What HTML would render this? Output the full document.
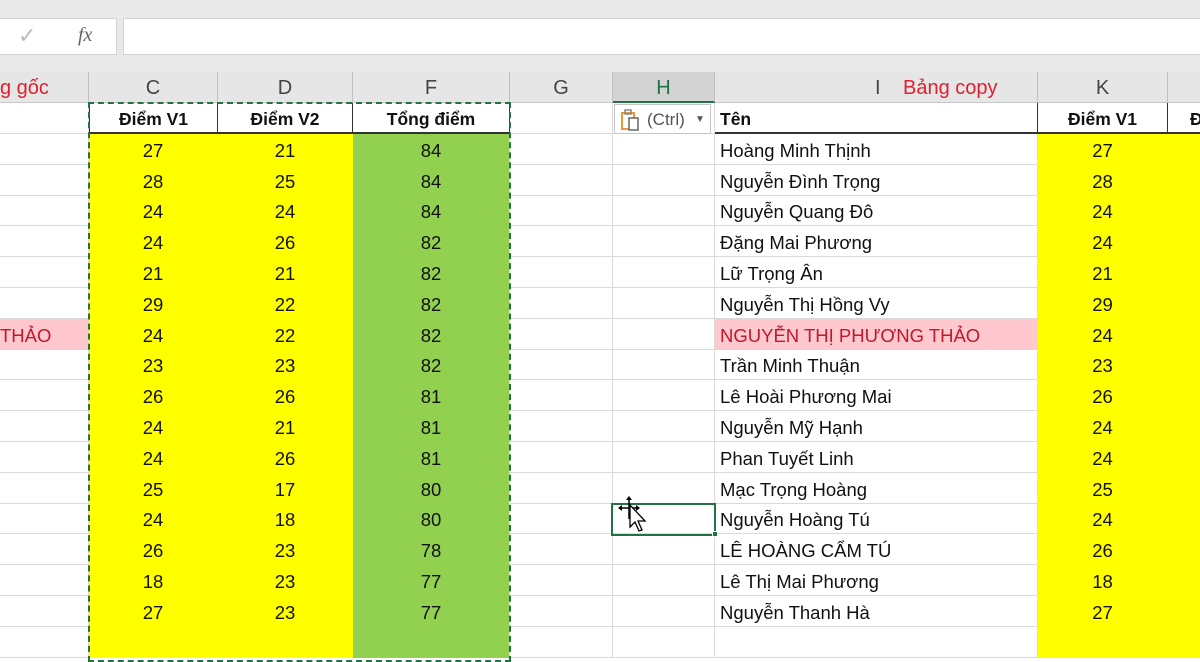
<!DOCTYPE html>
<html><head><meta charset="utf-8"><style>
*{margin:0;padding:0;box-sizing:border-box}
body{width:1200px;height:630px;overflow:hidden;background:#fff;font-family:"Liberation Sans",sans-serif;position:relative}
.top{position:absolute;left:0;top:0;width:1200px;height:72px;background:#e9e9e9}
.fxbox{position:absolute;left:0;top:18px;width:117px;height:37px;background:#fff;border:1px solid #d4d4d4;border-left:none}
.inp{position:absolute;left:123px;top:18px;width:1077px;height:37px;background:#fff;border:1px solid #d4d4d4;border-right:none}
.hdr{position:absolute;left:0;top:72px;height:31px;width:1200px;background:#e6e6e6;border-bottom:1px solid #c8c8c8}
.hc{position:absolute;top:0;height:31px;line-height:33px;text-align:center;color:#444;font-size:20px;border-right:1px solid #c0c0c0}
.row{position:absolute;left:0;width:1200px;height:31px}
.c{position:absolute;top:0;height:31px;line-height:34px;font-size:18.5px;color:#111;border-right:1px solid #dadada;border-bottom:1px solid #dadada;text-align:center;white-space:nowrap;overflow:hidden}
.y{background:#ffff00}.g{background:#92d050}.p{background:#ffc7ce}
.n{text-align:left;padding-left:5px}
.b{font-weight:bold;font-size:17.5px;line-height:32px;border-bottom:2px solid #333;border-right:1px solid #333}
.red{color:#c0192b}
</style></head><body>
<div class="top"></div>
<div class="fxbox"><span style="position:absolute;left:18px;top:4px;font-size:22px;color:#bbb">✓</span><span style="position:absolute;left:78px;top:5px;font-family:'Liberation Serif',serif;font-style:italic;font-size:20px;color:#666">fx</span></div>
<div class="inp"></div>
<div class="hdr">
<div class="hc red" style="left:0;width:89px;text-align:left;color:#e02030">g gốc</div>
<div class="hc" style="left:89px;width:129px">C</div>
<div class="hc" style="left:218px;width:135px">D</div>
<div class="hc" style="left:353px;width:157px">F</div>
<div class="hc" style="left:510px;width:103px">G</div>
<div class="hc" style="left:613px;width:102px;background:#d3d3d3;color:#217346;border-bottom:2px solid #217346">H</div>
<div class="hc" style="left:715px;width:323px"><span style="position:absolute;left:160px">I</span><span style="position:absolute;left:188px;color:#e02030">Bảng copy</span></div>
<div class="hc" style="left:1038px;width:130px">K</div>
<div class="hc" style="left:1168px;width:40px"></div>
</div>
<div id="rows"></div>
<script>
var d=[["","","","","Tên",""],
[27,21,84,"Hoàng Minh Thịnh"],[28,25,84,"Nguyễn Đình Trọng"],[24,24,84,"Nguyễn Quang Đô"],[24,26,82,"Đặng Mai Phương"],[21,21,82,"Lữ Trọng Ân"],[29,22,82,"Nguyễn Thị Hồng Vy"],[24,22,82,"NGUYỄN THỊ PHƯƠNG THẢO"],[23,23,82,"Trần Minh Thuận"],[26,26,81,"Lê Hoài Phương Mai"],[24,21,81,"Nguyễn Mỹ Hạnh"],[24,26,81,"Phan Tuyết Linh"],[25,17,80,"Mạc Trọng Hoàng"],[24,18,80,"Nguyễn Hoàng Tú"],[26,23,78,"LÊ HOÀNG CẨM TÚ"],[18,23,77,"Lê Thị Mai Phương"],[27,23,77,"Nguyễn Thanh Hà"],["","","",""]];
var h="";
for(var i=0;i<d.length;i++){var r=d[i],t=103+i*30.8,hd=i==0,pk=i==7;
h+='<div class="row" style="top:'+t+'px">';
h+='<div class="c '+(pk?'p red':'')+'" style="left:0;width:89px;text-align:right;padding-right:44px">'+(pk?'THẢO':'')+'</div>';
if(hd){h+='<div class="c b" style="left:89px;width:129px;border-left:1px solid #333">Điểm V1</div><div class="c b" style="left:218px;width:135px">Điểm V2</div><div class="c b" style="left:353px;width:157px">Tổng điểm</div>';}
else{h+='<div class="c y" style="left:89px;width:129px;border-right-color:#ffff00;border-bottom-color:#ffff00">'+r[0]+'</div><div class="c y" style="left:218px;width:135px;border-right-color:#ffff00;border-bottom-color:#ffff00">'+r[1]+'</div><div class="c g" style="left:353px;width:157px;border-bottom-color:#92d050">'+r[2]+'</div>';}
h+='<div class="c" style="left:510px;width:103px"></div><div class="c" style="left:613px;width:102px"></div>';
if(hd){h+='<div class="c b n" style="left:715px;width:323px">Tên</div><div class="c b" style="left:1038px;width:130px">Điểm V1</div><div class="c b" style="left:1168px;width:40px;text-align:left;padding-left:22px">Đ</div>';}
else{h+='<div class="c n '+(pk?'p red':'')+'" style="left:715px;width:323px">'+r[3]+'</div><div class="c y" style="left:1038px;width:130px;border-right-color:#ffff00;border-bottom-color:#ffff00">'+r[0]+'</div><div class="c y" style="left:1168px;width:40px;border-bottom-color:#ffff00"></div>';}
h+='</div>';}
document.getElementById('rows').innerHTML=h;
</script>
<div style="position:absolute;left:88px;top:102px;width:423px;height:560px;border:2px dashed #217346"></div>
<div style="position:absolute;left:614px;top:104px;width:97px;height:30px;background:#fff;border:1px solid #c6c6c6;font-size:17px;line-height:30px;color:#555">
<svg style="position:absolute;left:5px;top:4px" width="22" height="22" viewBox="0 0 22 22"><rect x="2" y="4" width="12" height="16" fill="none" stroke="#e39b32" stroke-width="2"/><rect x="5" y="1" width="6" height="4" fill="none" stroke="#888" stroke-width="1.5"/><rect x="9" y="9" width="9" height="12" fill="#fff" stroke="#666" stroke-width="1.5"/></svg>
<span style="position:absolute;left:32px">(Ctrl)</span><span style="position:absolute;left:80px;font-size:10px">▼</span></div>
<div style="position:absolute;left:611px;top:503px;width:105px;height:33px;border:2px solid #217346"></div>
<div style="position:absolute;left:712px;top:531px;width:6px;height:6px;background:#217346;border:1px solid #fff"></div>
<svg style="position:absolute;left:615px;top:495px" width="36" height="45" viewBox="0 0 36 45"><path d="M14 2v22M4 13h20" stroke="#000" stroke-width="1.5"/><path d="M14 1l-3 4h6zM3 13l4-3v6zM25 13l-4-3v6z" fill="#000"/><path d="M15 10v22l5-5 4 9 3-1-4-9h7z" fill="#fff" stroke="#000" stroke-width="1.3"/></svg>
</body></html>
